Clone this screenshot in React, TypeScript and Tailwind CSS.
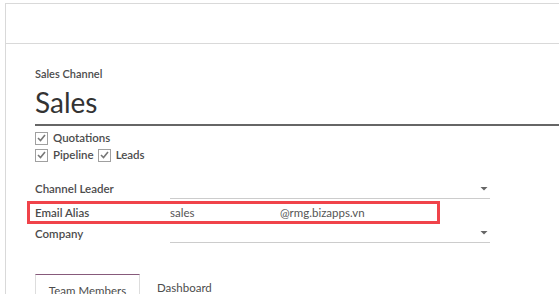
function Check({ label }: { label: string }) {
  return (
    <label className="flex items-center gap-[5px]">
      <span className="flex h-[13px] w-[13px] items-center justify-center border border-[#a0a0a0] bg-white">
        <svg width="9" height="8" viewBox="0 0 9 8">
          <path d="M1 4 L3.5 6.5 L8 1" fill="none" stroke="#777" strokeWidth="1.6" />
        </svg>
      </span>
      <span className="text-[11.5px] font-semibold leading-[14px] text-[#4c4c4c]">{label}</span>
    </label>
  )
}

function Caret() {
  return (
    <svg width="8" height="5" viewBox="0 0 8 5" className="mb-[6px]">
      <path d="M0.5 0 H7.5 L4 3.5 Z" fill="#666" />
    </svg>
  )
}

export default function App() {
  return (
    <div className="h-[294px] w-[559px] overflow-hidden bg-white pl-[5px] pt-[3px] font-['Lato',sans-serif] text-[#4c4c4c]">
      <div className="h-full border-l border-t border-[#d9d9d9]">
        <div className="h-[40px] border-b border-[#d9d9d9]" />
        <div className="pl-[29px] pt-[22px]">
          <div className="text-[11px] font-semibold leading-[15px] text-[#4c4c4c]">Sales Channel</div>
          <div className="border-b-2 border-[#666] pb-[4px] pt-[3px] text-[28px] leading-[36px] text-[#333]">Sales</div>
          <div className="flex flex-col gap-[3px] pt-[5px]">
            <Check label="Quotations" />
            <div className="flex gap-[4px]">
              <Check label="Pipeline" />
              <Check label="Leads" />
            </div>
          </div>

          <div className="mt-[19px] w-[455px] text-[11.5px]">
            <div className="grid h-[20px] grid-cols-[135px_320px] items-start">
              <div className="font-semibold leading-[16px]">Channel Leader</div>
              <div className="flex h-[18px] items-end justify-end border-b border-[#ccc] pr-[2px]">
                <Caret />
              </div>
            </div>
            <div className="-ml-[8px] grid h-[23px] w-[413px] grid-cols-[135px_110px_1fr] items-center border-[3px] border-[#f0434a] pl-[5px]">
              <div className="font-semibold">Email Alias</div>
              <div className="text-[#555]">sales</div>
              <div className="text-[#555]">@rmg.bizapps.vn</div>
            </div>
            <div className="grid h-[20px] grid-cols-[135px_320px] items-start">
              <div className="pt-[2px] font-semibold leading-[16px]">Company</div>
              <div className="flex h-[19px] items-end justify-end border-b border-[#ccc] pr-[2px]">
                <Caret />
              </div>
            </div>
          </div>

          <div className="mt-[30px] flex text-[11.5px]">
            <div className="h-[40px] w-[105px] border-x border-t border-[#ddd] border-t-[#875a7b] pt-[8px] text-center leading-[15px] text-[#4c4c4c]">
              Team Members
            </div>
            <div className="pl-[17px] pt-[6px] leading-[15px]">Dashboard</div>
          </div>
        </div>
      </div>
    </div>
  )
}
